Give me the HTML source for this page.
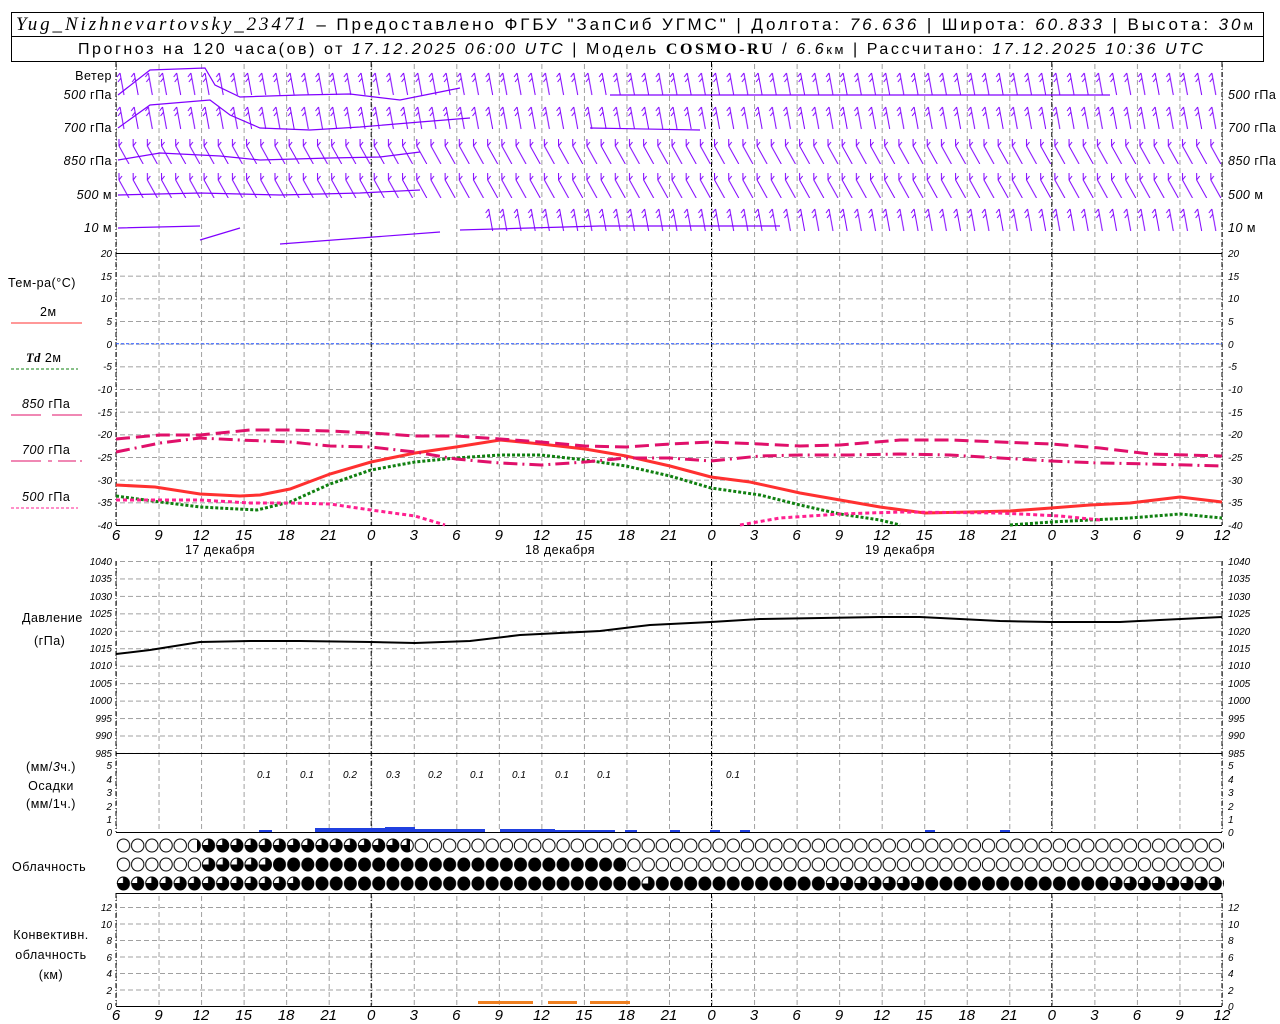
<!DOCTYPE html>
<html><head><meta charset="utf-8"><style>
html,body{margin:0;padding:0;background:#fff}
svg{display:block}
text{font-family:"Liberation Sans","DejaVu Sans",sans-serif}
.t{font-size:17px}
.lab{font-size:12.5px;letter-spacing:0.5px}
.ax{font-size:10px;font-style:italic}
.xl{font-size:15px;font-style:italic}
</style></head><body>
<svg width="1280" height="1024" viewBox="0 0 1280 1024" xmlns="http://www.w3.org/2000/svg">
<defs>
<pattern id="vg" x="116" y="0" width="42.538" height="8" patternUnits="userSpaceOnUse"><line x1="0.5" y1="0" x2="0.5" y2="5" stroke="#a0a0a0" stroke-width="1"/></pattern>
<pattern id="hgT" x="0" y="253" width="8" height="22.667" patternUnits="userSpaceOnUse"><line x1="0" y1="0.5" x2="5" y2="0.5" stroke="#a0a0a0"/></pattern>
<pattern id="hgP" x="0" y="561" width="8" height="17.45" patternUnits="userSpaceOnUse"><line x1="0" y1="0.5" x2="5" y2="0.5" stroke="#a0a0a0"/></pattern>
<pattern id="hgC" x="0" y="1006" width="8" height="16.5" patternUnits="userSpaceOnUse"><line x1="0" y1="0.5" x2="5" y2="0.5" stroke="#a0a0a0"/></pattern>
<pattern id="wb" x="116" y="0" width="14.18" height="34" patternUnits="userSpaceOnUse"><path d="M8 27 L4 5 M4 5 L1 9 M5 10 L2 14" stroke="#8000ff" stroke-width="1" fill="none"/></pattern>
<pattern id="wb2" x="116" y="0" width="14.18" height="34" patternUnits="userSpaceOnUse"><path d="M13 28 L3 10 L3 3 M3 10 L6 6" stroke="#8000ff" stroke-width="1" fill="none"/></pattern>
<pattern id="cO" x="116.5" y="0" width="14.18" height="19" patternUnits="userSpaceOnUse"><ellipse cx="7" cy="9.5" rx="6.2" ry="6.5" fill="#fff" stroke="#000"/></pattern>
<pattern id="cF" x="116.5" y="0" width="14.18" height="19" patternUnits="userSpaceOnUse"><ellipse cx="7" cy="9.5" rx="6.5" ry="7" fill="#000"/></pattern>
<pattern id="cH" x="116.5" y="0" width="14.18" height="19" patternUnits="userSpaceOnUse"><ellipse cx="7" cy="9.5" rx="6.2" ry="6.5" fill="#fff" stroke="#000"/><path d="M7 3 A6.2 6.5 0 0 1 7 16 Z M7 9.5 L0.8 9.5 A6.2 6.5 0 0 0 7 16Z" fill="#000"/></pattern>
<pattern id="cQ" x="116.5" y="0" width="14.18" height="19" patternUnits="userSpaceOnUse"><ellipse cx="7" cy="9.5" rx="6.5" ry="7" fill="#000"/><path d="M7 3 L7 9.5 L0.8 9.5 A6.2 6.5 0 0 1 7 3Z" fill="#fff" stroke="#000"/></pattern>
</defs>

<!-- header -->
<rect x="11.5" y="12.5" width="1252" height="49" fill="none" stroke="#000"/>
<line x1="11" y1="36.5" x2="1264" y2="36.5" stroke="#000"/>
<text x="16" y="30" class="t" textLength="1237" lengthAdjust="spacing"><tspan font-family="Liberation Serif" font-style="italic" font-size="19">Yug_Nizhnevartovsky_23471</tspan> – Предоставлено ФГБУ "ЗапСиб УГМС" | Долгота: <tspan font-style="italic">76.636</tspan> | Широта: <tspan font-style="italic">60.833</tspan> | Высота: <tspan font-style="italic">30</tspan><tspan font-size="14">м</tspan></text>
<text x="78" y="54" font-size="16" textLength="1125" lengthAdjust="spacing">Прогноз на 120 часа(ов) от <tspan font-style="italic">17.12.2025 06:00 UTC</tspan>  | Модель <tspan font-family="Liberation Serif" font-weight="bold">COSMO-RU</tspan> / <tspan font-style="italic">6.6</tspan><tspan font-size="13">км</tspan> | Рассчитано: <tspan font-style="italic">17.12.2025 10:36 UTC</tspan></text>

<!-- grid vertical -->
<rect x="116" y="62" width="1107" height="191" fill="url(#vg)"/>
<rect x="116" y="253" width="1107" height="272" fill="url(#vg)"/>
<rect x="116" y="561" width="1107" height="192" fill="url(#vg)"/>
<rect x="116" y="753" width="1107" height="79" fill="url(#vg)"/>
<rect x="116" y="893" width="1107" height="113" fill="url(#vg)"/>
<rect x="116" y="253" width="1107" height="272" fill="url(#hgT)"/>
<rect x="116" y="561" width="1107" height="192" fill="url(#hgP)"/>
<rect x="116" y="900" width="1107" height="106" fill="url(#hgC)"/>
<g stroke="#000" stroke-dasharray="5,2,1,2">
<path d="M116 62V525M371.2 62V525M711.5 62V525M1051.8 62V525M1222 62V525M116 561V832M371.2 561V832M711.5 561V832M1051.8 561V832M1222 561V832M116 893V1006M371.2 893V1006M711.5 893V1006M1051.8 893V1006M1222 893V1006"/>
</g>
<line x1="116" y1="253.5" x2="1222" y2="253.5" stroke="#000"/>
<line x1="116" y1="525.5" x2="1222" y2="525.5" stroke="#000"/>
<line x1="116" y1="753.5" x2="1222" y2="753.5" stroke="#000"/>
<line x1="116" y1="832.5" x2="1222" y2="832.5" stroke="#000"/>
<line x1="116" y1="893.5" x2="1222" y2="893.5" stroke="#000"/>
<line x1="116" y1="1006.5" x2="1222" y2="1006.5" stroke="#000"/>
<line x1="116" y1="343.7" x2="1222" y2="343.7" stroke="#2050ff" stroke-dasharray="3,2"/>

<!-- wind -->
<rect x="116" y="68" width="1107" height="30" fill="url(#wb)"/>
<rect x="116" y="101" width="1107" height="30" fill="url(#wb)"/>
<rect x="116" y="134" width="1107" height="30" fill="url(#wb2)"/>
<rect x="116" y="168" width="1107" height="30" fill="url(#wb2)"/>
<rect x="480" y="201" width="743" height="30" fill="url(#wb)"/>
<g stroke="#8000ff" fill="none" stroke-width="1.2">
<path d="M118 95L150 70L205 68L215 85L240 97L300 95L350 94L400 100L430 94L460 88M118 128L150 105L210 100L230 115L260 128L310 130L360 127L420 122L470 118"/>
<path d="M118 160L160 153L220 156L260 160L330 158L380 157L420 152M118 195L200 193L280 195L360 193L420 190M118 228L200 226M200 240L240 228M280 244L360 238L440 232M460 230L600 226L780 226"/>
<path d="M610 95L860 95L1110 95M590 128L700 130"/>
</g>
<g class="lab" font-size="11">
<text x="112" y="80" text-anchor="end">Ветер</text>
<text x="112" y="99" text-anchor="end"><tspan font-style="italic">500</tspan> гПа</text>
<text x="112" y="132" text-anchor="end"><tspan font-style="italic">700</tspan> гПа</text>
<text x="112" y="165" text-anchor="end"><tspan font-style="italic">850</tspan> гПа</text>
<text x="112" y="199" text-anchor="end"><tspan font-style="italic">500</tspan> м</text>
<text x="112" y="232" text-anchor="end"><tspan font-style="italic">10</tspan> м</text>
<text x="1228" y="99"><tspan font-style="italic">500</tspan> гПа</text>
<text x="1228" y="132"><tspan font-style="italic">700</tspan> гПа</text>
<text x="1228" y="165"><tspan font-style="italic">850</tspan> гПа</text>
<text x="1228" y="199"><tspan font-style="italic">500</tspan> м</text>
<text x="1228" y="232"><tspan font-style="italic">10</tspan> м</text>
</g>

<!-- temperature labels -->
<g class="ax" text-anchor="end">
<text x="112" y="257">20</text><text x="112" y="280">15</text><text x="112" y="302">10</text><text x="112" y="325">5</text><text x="112" y="348">0</text><text x="112" y="370">-5</text><text x="112" y="393">-10</text><text x="112" y="416">-15</text><text x="112" y="438">-20</text><text x="112" y="461">-25</text><text x="112" y="484">-30</text><text x="112" y="506">-35</text><text x="112" y="529">-40</text>
</g>
<g class="ax">
<text x="1228" y="257">20</text><text x="1228" y="280">15</text><text x="1228" y="302">10</text><text x="1228" y="325">5</text><text x="1228" y="348">0</text><text x="1228" y="370">-5</text><text x="1228" y="393">-10</text><text x="1228" y="416">-15</text><text x="1228" y="438">-20</text><text x="1228" y="461">-25</text><text x="1228" y="484">-30</text><text x="1228" y="506">-35</text><text x="1228" y="529">-40</text>
</g>
<g class="lab">
<text x="8" y="287">Тем-ра(°C)</text>
<text x="40" y="316">2м</text>
<text x="26" y="362"><tspan font-family="Liberation Serif" font-style="italic" font-weight="bold">Td</tspan>  2м</text>
<text x="22" y="408"><tspan font-style="italic">850</tspan> гПа</text>
<text x="22" y="454"><tspan font-style="italic">700</tspan> гПа</text>
<text x="22" y="501"><tspan font-style="italic">500</tspan> гПа</text>
</g>
<line x1="11" y1="323" x2="82" y2="323" stroke="#ff3030"/>
<line x1="11" y1="369" x2="78" y2="369" stroke="#108010" stroke-dasharray="3,2"/>
<path d="M11 415H41M52 415H82" stroke="#e0106a"/>
<path d="M11 461H41M48 461H52M58 461H76M80 461H82" stroke="#e0106a"/>
<line x1="11" y1="508" x2="78" y2="508" stroke="#ff2090" stroke-dasharray="3,2"/>

<g fill="none" stroke-width="3">
<polyline stroke="#ff3030" points="116,485 155,487 200,494 240,496 260,495 290,489 330,474 371,462 415,453 456,447 500,440 541,444 585,449 626,456 670,466 711,477 750,482 800,493 840,500 880,507 925,513 970,512 1010,511 1051,508 1090,505 1130,503 1180,497 1222,502"/>
<polyline stroke="#108010" stroke-dasharray="3,2" points="116,496 160,502 200,507 257,510 290,502 330,484 371,470 415,462 456,458 500,455 541,455 585,460 626,466 670,476 711,488 760,495 800,505 840,514 880,520 900,525"/>
<polyline stroke="#108010" stroke-dasharray="3,2" points="1010,525 1051,522 1090,520 1130,518 1180,514 1222,518"/>
<polyline stroke="#ff2090" stroke-dasharray="4,3" points="116,500 200,500 250,503 290,503 330,504 371,510 415,516 445,525"/>
<polyline stroke="#ff2090" stroke-dasharray="4,3" points="740,525 780,518 840,514 900,512 1000,513 1060,516 1100,520"/>
<polyline stroke="#e0106a" stroke-dasharray="14,6" points="116,439 160,435 200,435 250,430 290,430 330,431 371,433 415,436 456,436 500,439 541,442 585,446 626,447 670,444 711,442 760,444 800,446 840,445 900,440 950,440 1000,442 1051,444 1100,448 1150,454 1222,456"/>
<polyline stroke="#e0106a" stroke-dasharray="14,5,2,5" points="116,452 160,443 200,438 240,440 290,442 330,446 371,447 415,452 456,459 500,463 541,465 585,462 626,458 670,458 711,461 760,456 800,455 850,455 900,454 950,455 1000,458 1051,461 1100,463 1150,464 1222,466"/>
</g>

<!-- x labels temp -->
<g class="xl" text-anchor="middle">
<text x="116" y="540">6</text><text x="158.5" y="540">9</text><text x="201" y="540">12</text><text x="243.6" y="540">15</text><text x="286.2" y="540">18</text><text x="328.7" y="540">21</text><text x="371.2" y="540">0</text><text x="413.8" y="540">3</text><text x="456.3" y="540">6</text><text x="498.8" y="540">9</text><text x="541.4" y="540">12</text><text x="583.9" y="540">15</text><text x="626.5" y="540">18</text><text x="669" y="540">21</text><text x="711.5" y="540">0</text><text x="754.1" y="540">3</text><text x="796.6" y="540">6</text><text x="839.1" y="540">9</text><text x="881.7" y="540">12</text><text x="924.2" y="540">15</text><text x="966.8" y="540">18</text><text x="1009.3" y="540">21</text><text x="1051.8" y="540">0</text><text x="1094.4" y="540">3</text><text x="1136.9" y="540">6</text><text x="1179.5" y="540">9</text><text x="1222" y="540">12</text>
</g>
<g class="lab" text-anchor="middle" letter-spacing="1">
<text x="220" y="554">17 декабря</text><text x="560" y="554">18 декабря</text><text x="900" y="554">19 декабря</text>
</g>

<!-- pressure -->
<g class="ax" text-anchor="end">
<text x="112" y="565">1040</text><text x="112" y="582">1035</text><text x="112" y="600">1030</text><text x="112" y="617">1025</text><text x="112" y="635">1020</text><text x="112" y="652">1015</text><text x="112" y="669">1010</text><text x="112" y="687">1005</text><text x="112" y="704">1000</text><text x="112" y="722">995</text><text x="112" y="739">990</text><text x="112" y="757">985</text>
</g>
<g class="ax">
<text x="1228" y="565">1040</text><text x="1228" y="582">1035</text><text x="1228" y="600">1030</text><text x="1228" y="617">1025</text><text x="1228" y="635">1020</text><text x="1228" y="652">1015</text><text x="1228" y="669">1010</text><text x="1228" y="687">1005</text><text x="1228" y="704">1000</text><text x="1228" y="722">995</text><text x="1228" y="739">990</text><text x="1228" y="757">985</text>
</g>
<text x="22" y="622" class="lab">Давление</text>
<text x="34" y="645" class="lab">(гПа)</text>
<polyline fill="none" stroke="#000" stroke-width="2" points="116,654 150,650 200,642 250,641 300,641 371,642 415,643 470,641 520,635 600,631 650,625 711,622 760,619 880,617 920,617 960,619 1000,621 1051,622 1120,622 1160,620 1222,617"/>

<!-- precipitation -->
<g class="ax" text-anchor="end">
<text x="112" y="769">5</text><text x="112" y="783">4</text><text x="112" y="796">3</text><text x="112" y="810">2</text><text x="112" y="823">1</text><text x="112" y="836">0</text>
</g>
<g class="ax">
<text x="1228" y="769">5</text><text x="1228" y="783">4</text><text x="1228" y="796">3</text><text x="1228" y="810">2</text><text x="1228" y="823">1</text><text x="1228" y="836">0</text>
</g>
<g class="lab" text-anchor="middle">
<text x="51" y="771">(мм/<tspan font-style="italic">3</tspan>ч.)</text>
<text x="51" y="790">Осадки</text>
<text x="51" y="808">(мм/1ч.)</text>
</g>
<g class="ax" font-size="12" text-anchor="middle">
<text x="264" y="778">0.1</text><text x="307" y="778">0.1</text><text x="350" y="778">0.2</text><text x="393" y="778">0.3</text><text x="435" y="778">0.2</text><text x="477" y="778">0.1</text><text x="519" y="778">0.1</text><text x="562" y="778">0.1</text><text x="604" y="778">0.1</text><text x="733" y="778">0.1</text>
</g>
<g fill="#2040e0">
<rect x="259" y="830" width="13" height="2"/>
<rect x="315" y="828" width="70" height="4"/>
<rect x="385" y="827" width="30" height="5"/>
<rect x="415" y="829" width="70" height="3"/>
<rect x="500" y="829" width="55" height="3"/>
<rect x="555" y="830" width="60" height="2"/>
<rect x="625" y="830" width="12" height="2"/>
<rect x="670" y="830" width="10" height="2"/>
<rect x="710" y="830" width="10" height="2"/>
<rect x="740" y="830" width="10" height="2"/>
<rect x="925" y="830" width="10" height="2"/>
<rect x="1000" y="830" width="10" height="2"/>
</g>

<!-- clouds -->
<text x="12" y="871" class="lab">Облачность</text>
<rect x="116" y="834" width="81" height="19" fill="url(#cO)"/>
<rect x="197" y="834" width="213" height="19" fill="url(#cQ)"/>
<rect x="410" y="834" width="814" height="19" fill="url(#cO)"/>
<rect x="116" y="853" width="85" height="19" fill="url(#cO)"/>
<rect x="201" y="853" width="71" height="19" fill="url(#cH)"/>
<rect x="272" y="853" width="355" height="19" fill="url(#cF)"/>
<rect x="627" y="853" width="597" height="19" fill="url(#cO)"/>
<rect x="116" y="872" width="185" height="19" fill="url(#cQ)"/>
<rect x="301" y="872" width="335" height="19" fill="url(#cF)"/>
<rect x="636" y="872" width="15" height="19" fill="url(#cH)"/>
<rect x="651" y="872" width="170" height="19" fill="url(#cF)"/>
<rect x="821" y="872" width="100" height="19" fill="url(#cQ)"/>
<rect x="921" y="872" width="190" height="19" fill="url(#cF)"/>
<rect x="1111" y="872" width="113" height="19" fill="url(#cQ)"/>

<!-- convective -->
<g class="ax" text-anchor="end">
<text x="112" y="911">12</text><text x="112" y="928">10</text><text x="112" y="944">8</text><text x="112" y="961">6</text><text x="112" y="977">4</text><text x="112" y="994">2</text><text x="112" y="1010">0</text>
</g>
<g class="ax">
<text x="1228" y="911">12</text><text x="1228" y="928">10</text><text x="1228" y="944">8</text><text x="1228" y="961">6</text><text x="1228" y="977">4</text><text x="1228" y="994">2</text><text x="1228" y="1010">0</text>
</g>
<g class="lab" text-anchor="middle">
<text x="51" y="939">Конвективн.</text>
<text x="51" y="959">облачность</text>
<text x="51" y="979">(км)</text>
</g>
<g fill="#f08020">
<rect x="478" y="1001" width="55" height="3"/>
<rect x="548" y="1001" width="29" height="3"/>
<rect x="590" y="1001" width="40" height="3"/>
</g>
<g class="xl" text-anchor="middle">
<text x="116" y="1020">6</text><text x="158.5" y="1020">9</text><text x="201" y="1020">12</text><text x="243.6" y="1020">15</text><text x="286.2" y="1020">18</text><text x="328.7" y="1020">21</text><text x="371.2" y="1020">0</text><text x="413.8" y="1020">3</text><text x="456.3" y="1020">6</text><text x="498.8" y="1020">9</text><text x="541.4" y="1020">12</text><text x="583.9" y="1020">15</text><text x="626.5" y="1020">18</text><text x="669" y="1020">21</text><text x="711.5" y="1020">0</text><text x="754.1" y="1020">3</text><text x="796.6" y="1020">6</text><text x="839.1" y="1020">9</text><text x="881.7" y="1020">12</text><text x="924.2" y="1020">15</text><text x="966.8" y="1020">18</text><text x="1009.3" y="1020">21</text><text x="1051.8" y="1020">0</text><text x="1094.4" y="1020">3</text><text x="1136.9" y="1020">6</text><text x="1179.5" y="1020">9</text><text x="1222" y="1020">12</text>
</g>
</svg>
</body></html>
